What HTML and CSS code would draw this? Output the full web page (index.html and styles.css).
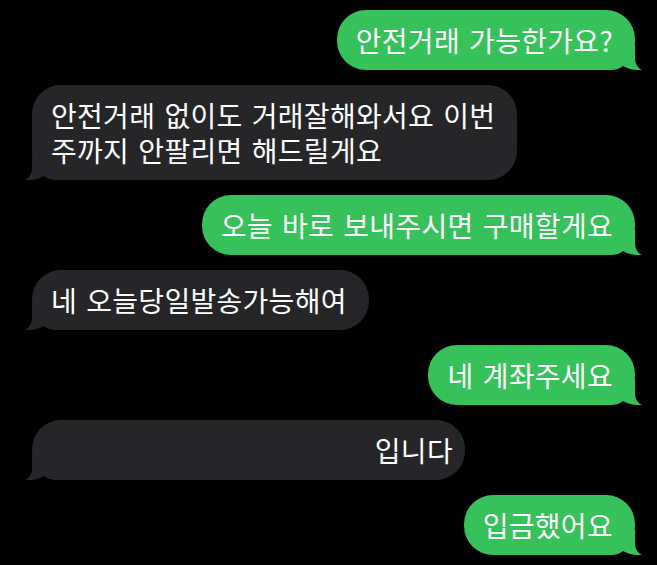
FILE: index.html
```html
<!DOCTYPE html>
<html lang="ko">
<head>
<meta charset="utf-8">
<link rel="stylesheet" href="styles.css">
</head>
<body>
<div class="chat">
  <div class="bubble out"><span class="txt">안전거래 가능한가요?</span><svg class="tail" viewBox="0 0 42 25" width="42" height="25"><path d="M35 0 L35 13 C35 19 38 23 42 25 C35 25.5 28 24 23 21 C20 23.5 16 25 10 25 L0 25 L0 0 Z"/></svg></div>
  <div class="bubble in"><span class="txt">안전거래 없이도 거래잘해와서요 이번<br>주까지 안팔리면 해드릴게요</span><svg class="tail" viewBox="0 0 42 25" width="42" height="25"><path d="M35 0 L35 13 C35 19 38 23 42 25 C35 25.5 28 24 23 21 C20 23.5 16 25 10 25 L0 25 L0 0 Z"/></svg></div>
  <div class="bubble out"><span class="txt">오늘 바로 보내주시면 구매할게요</span><svg class="tail" viewBox="0 0 42 25" width="42" height="25"><path d="M35 0 L35 13 C35 19 38 23 42 25 C35 25.5 28 24 23 21 C20 23.5 16 25 10 25 L0 25 L0 0 Z"/></svg></div>
  <div class="bubble in"><span class="txt">네 오늘당일발송가능해여</span><svg class="tail" viewBox="0 0 42 25" width="42" height="25"><path d="M35 0 L35 13 C35 19 38 23 42 25 C35 25.5 28 24 23 21 C20 23.5 16 25 10 25 L0 25 L0 0 Z"/></svg></div>
  <div class="bubble out"><span class="txt">네 계좌주세요</span><svg class="tail" viewBox="0 0 42 25" width="42" height="25"><path d="M35 0 L35 13 C35 19 38 23 42 25 C35 25.5 28 24 23 21 C20 23.5 16 25 10 25 L0 25 L0 0 Z"/></svg></div>
  <div class="bubble in wide"><span class="txt">입니다</span><svg class="tail" viewBox="0 0 42 25" width="42" height="25"><path d="M35 0 L35 13 C35 19 38 23 42 25 C35 25.5 28 24 23 21 C20 23.5 16 25 10 25 L0 25 L0 0 Z"/></svg></div>
  <div class="bubble out"><span class="txt">입금했어요</span><svg class="tail" viewBox="0 0 42 25" width="42" height="25"><path d="M35 0 L35 13 C35 19 38 23 42 25 C35 25.5 28 24 23 21 C20 23.5 16 25 10 25 L0 25 L0 0 Z"/></svg></div>
</div>
</body>
</html>
```

FILE: styles.css
```css
html, body {
  margin: 0;
  padding: 0;
  background: #000;
}
body {
  width: 657px;
  height: 565px;
  overflow: hidden;
  font-family: "Noto Sans CJK KR", "Noto Sans", sans-serif;
}
.chat {
  display: flex;
  flex-direction: column;
  gap: 15px;
  padding: 10px 22px 0 32px;
}
.bubble {
  position: relative;
  padding: 12.5px 22px 12.5px 19px;
  border-radius: 29px;
  font-size: 28px;
  line-height: 35px;
  letter-spacing: 0.3px;
  word-spacing: 1px;
  color: #fff;
  white-space: nowrap;
}
.txt {
  position: relative;
  z-index: 1;
}
.out {
  align-self: flex-end;
  background: #37c15a;
}
.in {
  align-self: flex-start;
  background: #262628;
}
.out .tail {
  fill: #37c15a;
}
.in .tail {
  fill: #262628;
}
.tail {
  position: absolute;
  bottom: 0;
  display: block;
}
.out .tail {
  right: -7px;
}
.in .tail {
  left: -7px;
  transform: scaleX(-1);
}
.wide {
  width: 433px;
  box-sizing: border-box;
  text-align: right;
  padding-right: 12px;
}
```
